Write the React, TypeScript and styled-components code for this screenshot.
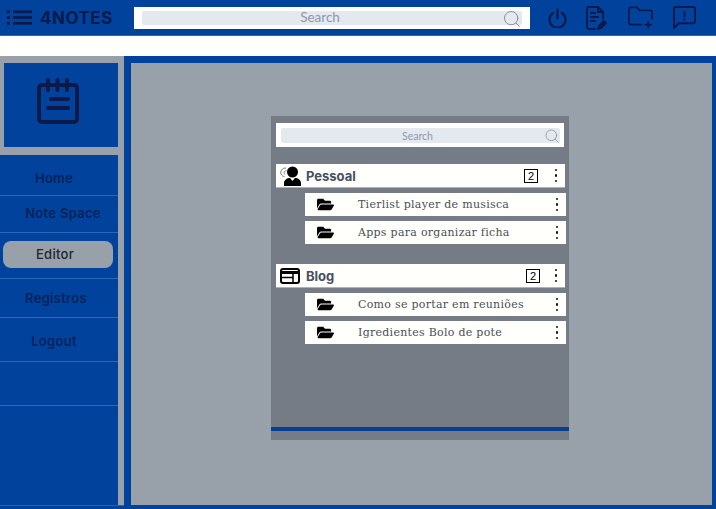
import React from "react";

import styled, {
  createGlobalStyle
} from "styled-components";
import {
  FaFolderOpen
} from "react-icons/fa";
import {
  Search as SearchIcon
} from "lucide-react";

const BLUE = "#00429c";
const GREY = "#98a0a9";
const INK = "#0c1a4b";

const GlobalStyle = createGlobalStyle`
  html, body {
    margin: 0;
    padding: 0;
    background: #fff;
  }

  body {
    font-family: "Inter", "Liberation Sans", sans-serif;
  }
`;

const ScPage = styled.div`
  display: flex;
  flex-direction: column;
  width: 716px;
  height: 509px;
  overflow: hidden;
`;

const ScTopBar = styled.header`
  display: flex;
  align-items: center;
  flex: none;
  height: 36px;
  background: ${BLUE};
  border-bottom: 1px solid #2b64b0;
  box-sizing: border-box;
`;

const ScBrand = styled.div`
  display: flex;
  align-items: center;
  width: 134px;
  padding-left: 7px;
  box-sizing: border-box;
  color: ${INK};
`;

const ScBrandName = styled.span`
  margin-left: 8px;
  font-size: 17px;
  font-weight: 700;
  letter-spacing: 0.5px;
`;

const ScSearchBox = styled.div<{ $small?: boolean }>`
  display: flex;
  align-items: center;
  box-sizing: border-box;
  background: #fff;
  ${props => (props.$small ? `
    height: 24px;
    padding: 0 4px 0 5px;
    margin: 7px 5px 0;
  ` : `
    width: 396px;
    height: 22px;
    padding: 0 8px;
  `)}
`;

const ScSearchField = styled.div<{ $small?: boolean }>`
  position: relative;
  flex: 1;
  height: ${props => (props.$small ? 15 : 14)}px;
  border-radius: 2px;
  background: #e4e8ef;
  color: #8d99ab;
  font-family: "Lato", sans-serif;
  font-size: ${props => (props.$small ? 10.5 : 13.5)}px;
  line-height: ${props => (props.$small ? 16 : 13)}px;
  text-align: center;
  padding-right: ${props => (props.$small ? 6 : 24)}px;
  svg {
    position: absolute;
    right: 0;
    top: ${props => (props.$small ? 0 : -2)}px;
    color: #8a8f96;
  }
`;

const ScTopIcons = styled.div`
  display: flex;
  align-items: center;
  flex: 1;
  color: ${INK};
`;

const ScTopIcon = styled.span<{ $left: number }>`
  display: flex;
  margin-left: ${props => props.$left}px;
`;

const ScBand = styled.div`
  flex: none;
  height: 20px;
  background: #fffffb;
`;

const ScBody = styled.div`
  display: flex;
  flex: 1;
  min-height: 0;
  border-bottom: 4px solid ${BLUE};
`;

const ScLeftColumn = styled.aside`
  display: flex;
  flex-direction: column;
  flex: none;
  width: 124px;
  padding-top: 7px;
  box-sizing: border-box;
  background: ${GREY};
  box-shadow: 0 1px 0 #1f62bd;
`;

const ScLogoBox = styled.div`
  display: flex;
  align-items: center;
  justify-content: center;
  width: 114px;
  height: 84px;
  margin-left: 4px;
  padding: 0 6px 9px 0;
  box-sizing: border-box;
  background: ${BLUE};
  color: ${INK};
`;

const ScNav = styled.nav`
  flex: 1;
  width: 118px;
  margin-top: 8px;
  background: ${BLUE};
`;

const ScNavRow = styled.div<{ $height: number; $top: number; $bottom: number }>`
  display: flex;
  align-items: center;
  box-sizing: border-box;
  height: ${props => props.$height}px;
  padding: ${props => props.$top}px 0 ${props => props.$bottom}px;
  border-bottom: 1px solid #2c68b6;
`;

const ScNavText = styled.span<{ $offset: number; $active?: boolean }>`
  display: flex;
  align-items: center;
  justify-content: center;
  box-sizing: border-box;
  font-size: 13px;
  font-weight: ${props => (props.$active ? 500 : 600)};
  letter-spacing: 0.3px;
  color: ${props => (props.$active ? "#1f2630" : "#062258")};
  ${props => (props.$active ? `
    width: 110px;
    height: 27px;
    margin-left: 3px;
    padding-right: 6px;
    border-radius: 8px;
    background: ${GREY};
  ` : `
    width: 108px;
    margin-left: ${props.$offset}px;
  `)}
`;

const ScMain = styled.main`
  flex: 1;
  display: flex;
  justify-content: center;
  box-sizing: border-box;
  padding: 53px 143px 0 140px;
  background: ${GREY};
  border-top: 7px solid ${BLUE};
  border-left: 7px solid ${BLUE};
  border-right: 4px solid ${BLUE};
`;

const ScPanel = styled.section`
  display: flex;
  flex-direction: column;
  width: 298px;
  height: 324px;
  box-sizing: border-box;
  background: #767c86;
`;

const ScGroups = styled.div`
  flex: 1;
  padding-top: 17px;
`;

const ScGroup = styled.div`
  margin-bottom: 20px;
`;

const ScGroupRow = styled.div`
  display: flex;
  align-items: center;
  width: 289px;
  height: 24px;
  margin-left: 5px;
  background: #fffffb;
  border-bottom: 1px solid #aeb2b8;
  box-sizing: border-box;
`;

const ScGroupIcon = styled.span`
  display: flex;
  justify-content: center;
  width: 27px;
  margin-right: 3px;
  color: #000;
`;

const ScGroupName = styled.span`
  flex: 1;
  font-size: 13px;
  font-weight: 700;
  color: #46505f;
`;

const ScCount = styled.span<{ $right: number }>`
  width: 14px;
  height: 14px;
  margin-right: ${props => props.$right}px;
  box-sizing: border-box;
  border: 1px solid #000;
  color: #000;
  font-family: "Liberation Sans", sans-serif;
  font-size: 11px;
  line-height: 13px;
  text-align: center;
`;

const ScDots = styled.span`
  display: flex;
  flex-direction: column;
  align-items: center;
  gap: 3px;
  width: 18px;
  i {
    width: 2.5px;
    height: 2.5px;
    border-radius: 50%;
    background: #111;
  }
`;

const ScNoteRow = styled.div`
  display: flex;
  align-items: center;
  width: 261px;
  height: 23px;
  margin: 5px 0 0 34px;
  background: #fffffb;
`;

const ScNoteIcon = styled.span`
  display: flex;
  justify-content: center;
  width: 41px;
  color: #000;
`;

const ScNoteName = styled.span`
  flex: 1;
  margin-left: 12px;
  font-family: "DejaVu Serif", serif;
  font-size: 11px;
  letter-spacing: 0.28px;
  color: #4a4f57;
`;

const ScRule = styled.div`
  height: 4px;
  margin-bottom: 9px;
  background: #053f93;
`;

function Dots(): React.ReactElement {
  return <ScDots>
    <i />
    <i />
    <i />
  </ScDots>;
}

function MenuGlyph(): React.ReactElement {
  return <svg width="25"
    height="15"
    viewBox="0 0 25 15"
    fill="currentColor">
    <rect x="0"
      y="0.5"
      width="3"
      height="2.6" />
    <rect x="0"
      y="6.2"
      width="3"
      height="2.6" />
    <rect x="0"
      y="12"
      width="3"
      height="2.6" />
    <rect x="6"
      y="0.5"
      width="19"
      height="2.6" />
    <rect x="6"
      y="6.2"
      width="19"
      height="2.6" />
    <rect x="6"
      y="12"
      width="19"
      height="2.6" />
  </svg>;
}

function NotepadGlyph(): React.ReactElement {
  return <svg width="42"
    height="46"
    viewBox="0 0 42 46"
    fill="none"
    stroke="currentColor"
    strokeWidth="4"
    strokeLinecap="round"
    strokeLinejoin="round">
    <path d="M5 7h32a3 3 0 0 1 3 3v31a3 3 0 0 1-3 3H5a3 3 0 0 1-3-3V10a3 3 0 0 1 3-3z" />
    <path d="M11 2v10M20.500 2v10M30 2v10" />
    <path d="M14 21h17M11 30h20" />
  </svg>;
}

function PowerGlyph(): React.ReactElement {
  return <svg width="19"
    height="20"
    viewBox="0 0 19 20"
    fill="none"
    stroke="currentColor"
    strokeWidth="2.2"
    strokeLinecap="round">
    <path d="M9.500 1.500v9" />
    <path d="M5 5a8 8 0 1 0 9 0" />
  </svg>;
}

function NoteEditGlyph(): React.ReactElement {
  return <svg width="21"
    height="24"
    viewBox="0 0 21 24"
    fill="none"
    stroke="currentColor"
    strokeWidth="1.800"
    strokeLinecap="round"
    strokeLinejoin="round">
    <path d="M9 23H3a2 2 0 0 1-2-2V3a2 2 0 0 1 2-2h9l5 5v7" />
    <path d="M12 1v5h5" />
    <path d="M5 7h4M5 11h7M5 15h4" />
    <path d="M12 23l1-3 5-5 2 2-5 5z"
      fill="currentColor" />
  </svg>;
}

function FolderAddGlyph(): React.ReactElement {
  return <svg width="26"
    height="23"
    viewBox="0 0 27 23"
    fill="none"
    stroke="currentColor"
    strokeWidth="1.800"
    strokeLinecap="round"
    strokeLinejoin="round">
    <path d="M14 19H3a2 2 0 0 1-2-2V3a2 2 0 0 1 2-2h6l3 3h11a2 2 0 0 1 2 2v7" />
    <path d="M21 16v6M18 19h6" />
  </svg>;
}

function MessageAlertGlyph(): React.ReactElement {
  return <svg width="23"
    height="23"
    viewBox="0 0 24 24"
    fill="none"
    stroke="currentColor"
    strokeWidth="2"
    strokeLinecap="round"
    strokeLinejoin="round">
    <path d="M3 1h18a2 2 0 0 1 2 2v13a2 2 0 0 1-2 2H6l-5 5V3a2 2 0 0 1 2-2z" />
    <path d="M12 6v5M12 14v.5" />
  </svg>;
}

function PersonGlyph(): React.ReactElement {
  return <svg width="22"
    height="20"
    viewBox="0 0 22 20">
    <circle cx="13.500"
      cy="6"
      r="5.500"
      fill="#000" />
    <path d="M5 20v-3c0-3 3-5 6-5l2.500 3 2.500-3c3 0 6 2 6 5v3z"
      fill="#000" />
    <path d="M7 2C3 2 1 5 2 8c.5 1.500 2 2.500 3.500 2.500M7.500 4.500C5 5 4.500 7 6 8.500"
      fill="none"
      stroke="#777"
      strokeWidth="1" />
  </svg>;
}

function WindowGlyph(): React.ReactElement {
  return <svg width="20"
    height="16"
    viewBox="0 0 20 16"
    fill="none"
    stroke="#000">
    <rect x="1"
      y="1"
      width="18"
      height="14"
      rx="2"
      strokeWidth="2" />
    <path d="M1 4.500h18"
      strokeWidth="3" />
    <path d="M1 9.500h12M13 5v10"
      strokeWidth="1.500" />
  </svg>;
}

const NAV_ITEMS = [{
  label: "Home",
  height: 41,
  offset: 0,
  top: 5,
  bottom: 0
}, {
  label: "Note Space",
  height: 37,
  offset: 9,
  top: 0,
  bottom: 2
}, {
  label: "Editor",
  height: 46,
  offset: 0,
  top: 0,
  bottom: 3,
  active: true
}, {
  label: "Registros",
  height: 39,
  offset: 2,
  top: 0,
  bottom: 0
}, {
  label: "Logout",
  height: 44,
  offset: 0,
  top: 2,
  bottom: 0
}, {
  label: "",
  height: 44,
  offset: 0,
  top: 0,
  bottom: 0
}];

const GROUPS = [{
  name: "Pessoal",
  icon: <PersonGlyph />,
  countRight: 9,
  notes: ["Tierlist player de musisca", "Apps para organizar ficha"]
}, {
  name: "Blog",
  icon: <WindowGlyph />,
  countRight: 7,
  notes: ["Como se portar em reuniões", "Igredientes Bolo de pote"]
}];

export default function App(): React.ReactElement {
  return <ScPage>
    <GlobalStyle />

    <ScTopBar>
      <ScBrand>
        <MenuGlyph />
        <ScBrandName>4NOTES</ScBrandName>
      </ScBrand>

      <ScSearchBox>
        <ScSearchField>
          Search
          <SearchIcon size={20}
            strokeWidth={1.2} />
        </ScSearchField>
      </ScSearchBox>

      <ScTopIcons>
        <ScTopIcon $left={18}>
          <PowerGlyph />
        </ScTopIcon>
        <ScTopIcon $left={19}>
          <NoteEditGlyph />
        </ScTopIcon>
        <ScTopIcon $left={21}>
          <FolderAddGlyph />
        </ScTopIcon>
        <ScTopIcon $left={19}>
          <MessageAlertGlyph />
        </ScTopIcon>
      </ScTopIcons>
    </ScTopBar>

    <ScBand />

    <ScBody>
      <ScLeftColumn>
        <ScLogoBox>
          <NotepadGlyph />
        </ScLogoBox>

        <ScNav>
          {NAV_ITEMS.map((item, i) => <ScNavRow key={i}
            $height={item.height}
            $top={item.top}
            $bottom={item.bottom}>
            {item.label ? <ScNavText $offset={item.offset}
              $active={item.active}>
              {item.label}
            </ScNavText> : null}
          </ScNavRow>)}
        </ScNav>
      </ScLeftColumn>

      <ScMain>
        <ScPanel>
          <ScSearchBox $small>
            <ScSearchField $small>
              Search
              <SearchIcon size={16}
                strokeWidth={1.2} />
            </ScSearchField>
          </ScSearchBox>

          <ScGroups>
            {GROUPS.map(group => <ScGroup key={group.name}>
              <ScGroupRow>
                <ScGroupIcon>{group.icon}</ScGroupIcon>
                <ScGroupName>{group.name}</ScGroupName>
                <ScCount $right={group.countRight}>2</ScCount>
                <Dots />
              </ScGroupRow>

              {group.notes.map(note => <ScNoteRow key={note}>
                <ScNoteIcon>
                  <FaFolderOpen size={17} />
                </ScNoteIcon>
                <ScNoteName>{note}</ScNoteName>
                <Dots />
              </ScNoteRow>)}
            </ScGroup>)}
          </ScGroups>

          <ScRule />
        </ScPanel>
      </ScMain>
    </ScBody>
  </ScPage>;
}
